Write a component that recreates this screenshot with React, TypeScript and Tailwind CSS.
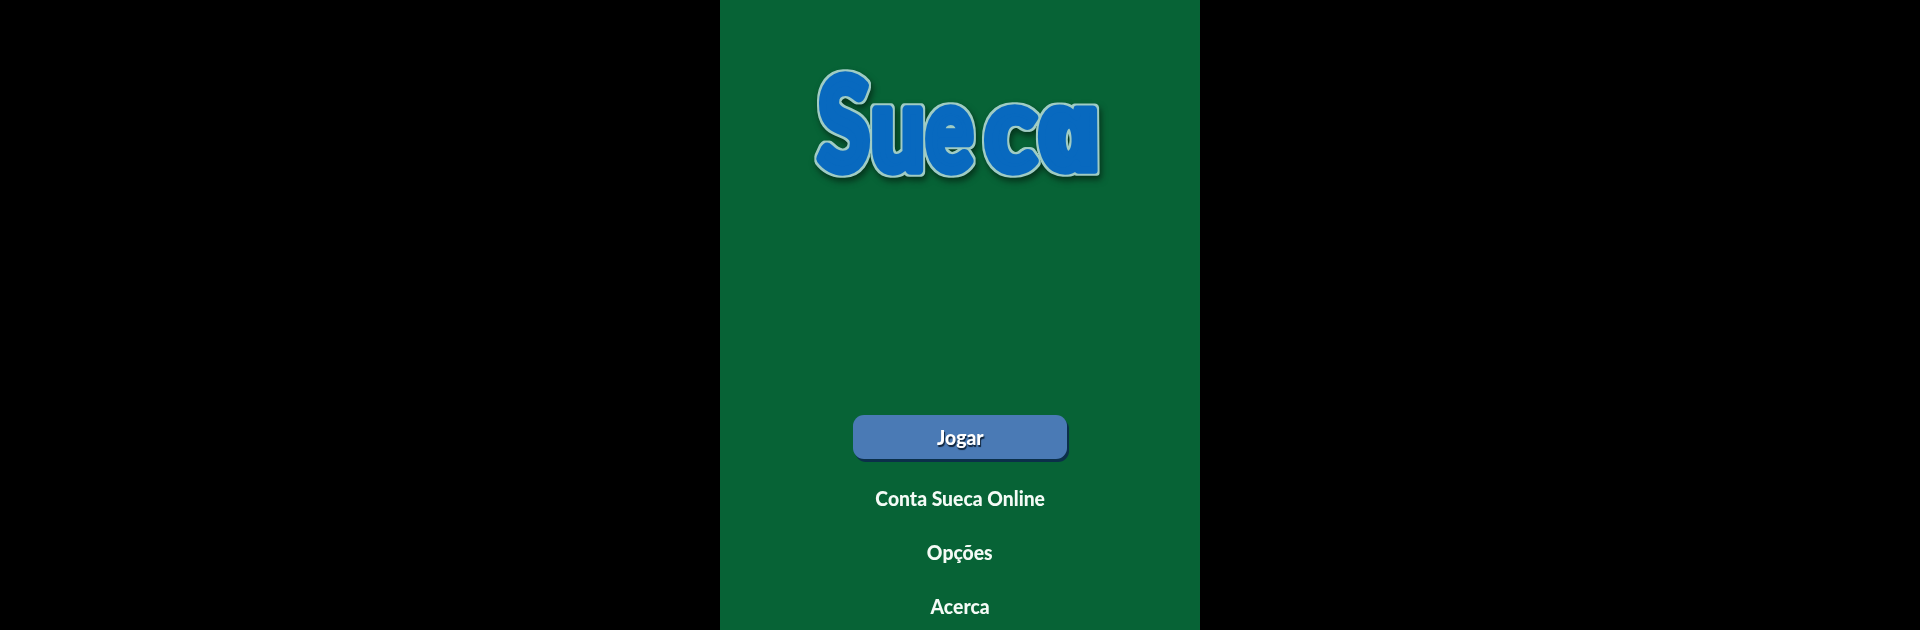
type L = { c: string; x: number; y: number; sx: number; sy: number; fs: number; sw: number; fam?: string; italic?: boolean; skew?: number };

const letters: L[] = [
  { c: "S", x: 818, y: 170, sx: 0.7, sy: 0.95, fs: 134, sw: 10 },
  { c: "u", x: 871, y: 170, sx: 0.76, sy: 0.93, fs: 125, sw: 10 },
  { c: "e", x: 926, y: 170, sx: 0.7, sy: 0.93, fs: 125, sw: 10 },
  { c: "c", x: 985, y: 170, sx: 0.84, sy: 0.93, fs: 125, sw: 10 },
  { c: "a", x: 1043, y: 170, sx: 0.9, sy: 0.93, fs: 118, sw: 8, fam: "'Open Sans',sans-serif", italic: true, skew: 12 },
];

export default function App() {
  const items = ["Conta Sueca Online", "Opções", "Acerca"];
  return (
    <div className="flex h-[630px] w-full justify-center overflow-hidden bg-black font-['Lato','Noto_Sans',sans-serif]">
      <div className="flex h-[630px] w-[480px] flex-col items-center bg-[#076336]">
        <svg width="480" height="200" viewBox="720 0 480 200" className="shrink-0" role="img" aria-label="Sueca">
          <defs>
            <filter id="logo" x="-10%" y="-10%" width="120%" height="125%" colorInterpolationFilters="sRGB">
              <feMorphology in="SourceAlpha" operator="dilate" radius="1.8" result="fat" />
              <feFlood floodColor="#a0ccc4" />
              <feComposite in2="fat" operator="in" result="rim" />
              <feGaussianBlur in="fat" stdDeviation="3" result="blur" />
              <feOffset in="blur" dx="2" dy="4" result="off" />
              <feFlood floodColor="#052c18" floodOpacity="0.85" />
              <feComposite in2="off" operator="in" result="shadow" />
              <feMerge result="all">
                <feMergeNode in="shadow" />
                <feMergeNode in="rim" />
                <feMergeNode in="SourceGraphic" />
              </feMerge>
              <feGaussianBlur in="all" stdDeviation="0.5" />
            </filter>
          </defs>
          <g filter="url(#logo)" fontFamily="'Lato',sans-serif" fontWeight="900" strokeLinejoin="round">
            {letters.map((l) => (
              <text
                key={l.c}
                transform={`translate(${l.x} ${l.y}) skewX(${l.skew ?? 0}) scale(${l.sx} ${l.sy})`}
                fontSize={l.fs}
                fontFamily={l.fam}
                fontStyle={l.italic ? "italic" : "normal"}
                fontWeight={l.italic ? 800 : 900}
                fill="#0869bf"
                stroke="#0869bf"
                strokeWidth={l.sw}
              >
                {l.c}
              </text>
            ))}
          </g>
        </svg>
        <button className="mt-[215px] flex h-[44px] w-[214px] shrink-0 items-center justify-center rounded-[11px] bg-[#4a7ab5] text-[21px] font-black text-white shadow-[2px_3px_0_#0b2f4a] [text-shadow:1px_2px_1px_#10243c]">
          <span className="scale-x-[0.92]">Jogar</span>
        </button>
        <div className="mt-[24px] flex flex-col items-center gap-[24px]">
          {items.map((t) => (
            <div key={t} className="h-[30px] scale-x-[0.92] text-[21px] leading-[30px] font-black whitespace-nowrap text-[#f4fbf6]">
              {t}
            </div>
          ))}
        </div>
      </div>
    </div>
  );
}
